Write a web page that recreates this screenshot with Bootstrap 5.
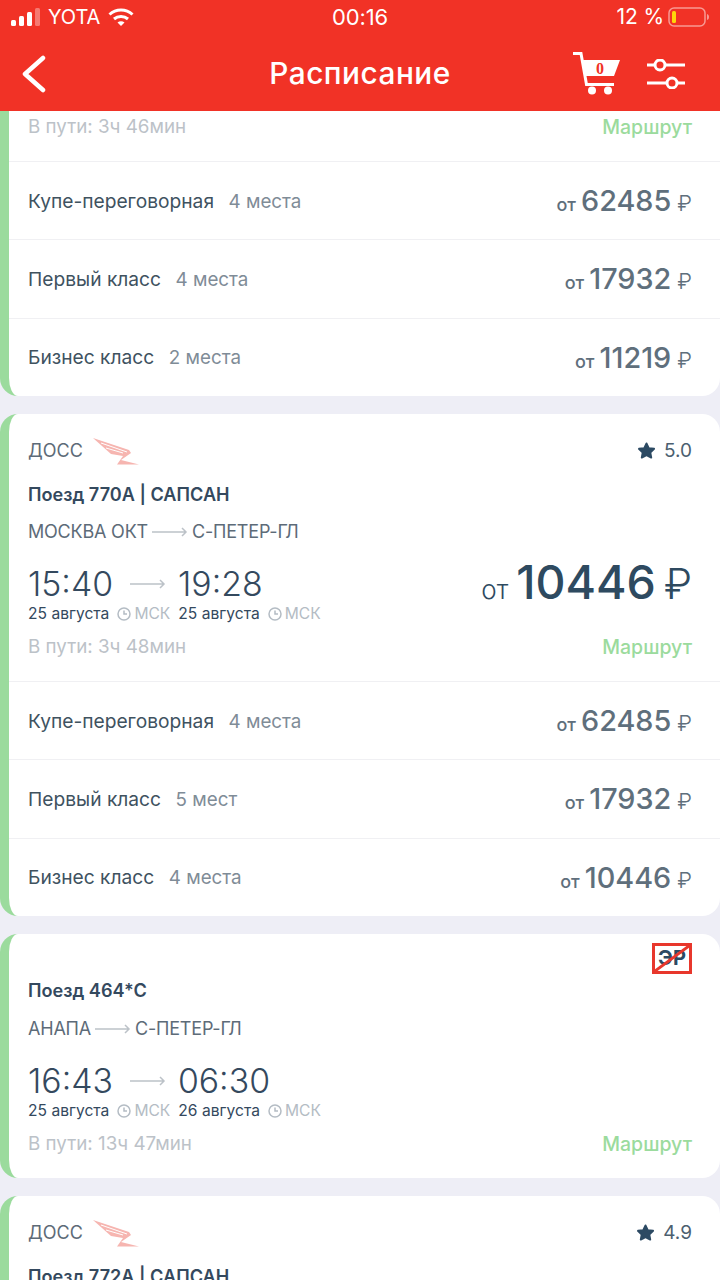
<!DOCTYPE html>
<html lang="en">
<head>
  <meta charset="UTF-8">
  <title>Расписание</title>
  <meta name="viewport" content="width=device-width, initial-scale=1">
  <link href="https://cdn.jsdelivr.net/npm/bootstrap@5.3.0/dist/css/bootstrap.min.css" rel="stylesheet">
  <style>
    html, body {
      height: 1280px;
      overflow: hidden;
    }
    body {
      background-color: #eeeef6;
      font-family: Inter, "Liberation Sans", sans-serif;
      color: #34495e;
    }
    .top-head {
      background-color: #f13226;
      color: #fff;
      height: 111px;
      position: relative;
      z-index: 2;
    }
    .status-row {
      height: 34px;
      padding: 0 10px;
      font-size: 21px;
      letter-spacing: -0.1px;
    }
    .status-side {
      width: 250px;
    }
    .carrier-name {
      font-size: 20px;
    }
    .clock-text {
      font-size: 22px;
    }
    .head-row {
      height: 77px;
      padding: 2px 35px 0 22px;
    }
    .head-title {
      font-size: 29.8px;
      font-weight: 500;
      letter-spacing: 0.5px;
    }
    .head-back {
      width: 133px;
    }
    .head-side {
      width: 120px;
      gap: 26px;
    }
    .feed {
      margin-top: -20px;
    }
    .trip-box {
      background: #fff;
      border-left: 9px solid #9bdb9d;
      border-radius: 18px;
      margin-bottom: 18px;
    }
    .trip-main {
      padding: 16px 28px 22px 19px;
    }
    .trip-main-cut {
      padding-top: 24px;
    }
    .trip-main-er {
      padding-top: 9px;
    }
    .firm-row {
      height: 40px;
      padding-top: 2px;
    }
    .firm-left {
      gap: 10px;
    }
    .firm-name {
      font-size: 18px;
      color: #5d6b78;
    }
    .rate-text {
      font-size: 19px;
      color: #4c5f70;
    }
    .train-name {
      font-size: 18.1px;
      font-weight: 600;
      margin-top: 12px;
      line-height: 24px;
    }
    .train-after-er {
      margin-top: 4px;
      margin-bottom: 15px;
    }
    .route-line {
      font-size: 18px;
      color: #5d6b78;
      margin-top: 14px;
      line-height: 24px;
      letter-spacing: -0.2px;
    }
    .train-after-er + .route-line {
      margin-top: 0;
    }
    .time-block {
      margin-top: 20px;
    }
    .time-big {
      font-size: 33.8px;
      font-weight: 300;
      line-height: 40px;
    }
    .time-arrow {
      margin: 0 12px 0 17px;
    }
    .date-sub {
      font-size: 15.6px;
      line-height: 18px;
      white-space: nowrap;
      margin-top: 1px;
    }
    .tz-sub {
      color: #b4bcc4;
      gap: 3px;
    }
    .way-row {
      margin-top: 12px;
    }
    .way-line {
      font-size: 18.8px;
      color: #bcc2c8;
      line-height: 24px;
    }
    .way-link {
      font-size: 19.5px;
      font-weight: 500;
      color: #9bdb9d;
      line-height: 24px;
    }
    .price-big {
      font-size: 46.5px;
      font-weight: 500;
      line-height: 40px;
      color: #2e4a60;
      gap: 8px;
      margin-top: -2px;
    }
    .price-from {
      font-size: 26px;
      font-weight: 300;
    }
    .rub-thin {
      font-size: 42px;
      font-weight: 300;
    }
    .cls-row {
      height: 78.33px;
      padding: 0 28px 0 19px;
      border-top: 1px solid #f0f0f3;
    }
    .cls-label {
      padding-top: 1px;
    }
    .cls-name {
      font-size: 19.2px;
      color: #40525f;
    }
    .cls-seats {
      font-size: 18.8px;
      color: #7f8c97;
      margin-left: 14.5px;
    }
    .cls-price {
      font-size: 28.8px;
      font-weight: 500;
      color: #5f6f7c;
      line-height: 36px;
      gap: 5px;
      padding-top: 5px;
    }
    .cls-from {
      font-size: 18px;
      font-weight: 500;
    }
    .cls-rub {
      font-size: 22px;
      font-weight: 300;
      margin-left: 1px;
    }
    .er-mark {
      width: 40px;
      height: 31px;
      position: relative;
      border: 3px solid #e8372c;
      font-size: 20px;
      font-weight: 700;
      line-height: 25px;
      text-align: center;
      color: #2c4a63;
    }
    .er-mark svg {
      position: absolute;
      left: 0;
      top: 0;
    }
  </style>
</head>
<body>

<header class="top-head">
  <div class="status-row d-flex align-items-center justify-content-between">
    <div class="status-side d-flex align-items-center gap-2">
      <svg width="30" height="18" viewBox="0 0 30 18">
        <rect x="1" y="12" width="5" height="6" rx="1.5" fill="#fff"/>
        <rect x="9" y="8" width="5" height="10" rx="1.5" fill="#fff"/>
        <rect x="17" y="4" width="5" height="14" rx="1.5" fill="#fff"/>
        <rect x="25" y="0" width="5" height="18" rx="1.5" fill="#fff" fill-opacity=".35"/>
      </svg>
      <span class="carrier-name">YOTA</span>
      <svg width="26" height="20" viewBox="0 0 26 20" fill="none" stroke="#fff" stroke-width="3">
        <path d="M1.5 7.5C8 1.5 18 1.5 24.5 7.5"/>
        <path d="M6 12C10 8.5 16 8.5 20 12"/>
        <path d="M13 19l-3.5-3.6c2-1.600 5-1.600 7 0z" fill="#fff" stroke="none"/>
      </svg>
    </div>
    <span class="clock-text">00:16</span>
    <div class="status-side d-flex align-items-center justify-content-end gap-1">
      <span>12 %</span>
      <svg width="42" height="20" viewBox="0 0 42 20">
        <rect x="1" y="1" width="36" height="18" rx="5" fill="none" stroke="#fff" stroke-opacity=".5" stroke-width="1.500"/>
        <rect x="4" y="4" width="4" height="12" rx="1.500" fill="#ffd60a"/>
        <path d="M39 7c1.500.5 2 1.500 2 3s-.5 2.500-2 3z" fill="#fff" fill-opacity=".5"/>
      </svg>
    </div>
  </div>
  <div class="head-row d-flex align-items-center justify-content-between">
    <div class="head-back">
      <svg width="24" height="38" viewBox="0 0 24 38" fill="none" stroke="#fff" stroke-width="4.500" stroke-linecap="round" stroke-linejoin="round">
        <path d="M21 3L3 19l18 16"/>
      </svg>
    </div>
    <div class="head-title">Расписание</div>
    <div class="head-side d-flex align-items-center justify-content-end">
      <svg width="48" height="43" viewBox="0 0 48 43" fill="#fff">
        <path d="M0 1.500H8L13.500 32.500H41" fill="none" stroke="#fff" stroke-width="3"/>
        <path d="M10 8H47L41 24H12z"/>
        <circle cx="19" cy="38.500" r="4"/>
        <circle cx="35" cy="38.500" r="4"/>
        <text x="27" y="22" font-size="16" font-weight="700" text-anchor="middle" fill="#f13226" font-family="Liberation Serif">0</text>
      </svg>
      <svg width="38" height="30" viewBox="0 0 38 30" fill="none" stroke="#fff" stroke-width="3">
        <path d="M0 6h7.500M18.500 6H38"/>
        <circle cx="13" cy="6" r="5"/>
        <path d="M0 24h19.500M30.500 24H38"/>
        <circle cx="25" cy="24" r="5"/>
      </svg>
    </div>
  </div>
</header>

<main class="feed">
  <section class="trip-box">
    <div class="trip-main trip-main-cut d-flex justify-content-between align-items-center">
      <span class="way-line">В пути: 3ч 46мин</span>
      <span class="way-link">Маршрут</span>
    </div>
    <div>
      <div class="cls-row d-flex align-items-center justify-content-between">
        <div class="cls-label"><span class="cls-name">Купе-переговорная</span><span class="cls-seats">4 места</span></div>
        <div class="cls-price d-flex align-items-baseline"><span class="cls-from">от</span><span>62485</span><span class="cls-rub">₽</span></div>
      </div>
      <div class="cls-row d-flex align-items-center justify-content-between">
        <div class="cls-label"><span class="cls-name">Первый класс</span><span class="cls-seats">4 места</span></div>
        <div class="cls-price d-flex align-items-baseline"><span class="cls-from">от</span><span>17932</span><span class="cls-rub">₽</span></div>
      </div>
      <div class="cls-row d-flex align-items-center justify-content-between">
        <div class="cls-label"><span class="cls-name">Бизнес класс</span><span class="cls-seats">2 места</span></div>
        <div class="cls-price d-flex align-items-baseline"><span class="cls-from">от</span><span>11219</span><span class="cls-rub">₽</span></div>
      </div>
    </div>
  </section>

  <section class="trip-box">
    <div class="trip-main">
      <div class="firm-row d-flex justify-content-between align-items-center">
        <div class="firm-left d-flex align-items-center">
          <span class="firm-name">ДОСС</span>
          <svg width="46" height="28" viewBox="0 0 46 28">
            <path d="M0 1L36 13l2 3-10 7 18 4.500H24l6-8.500-12-2z" fill="#f6b5b0"/>
            <path d="M8 6l26 9M13 11l17 5" stroke="#fff" stroke-width="1" fill="none"/>
          </svg>
        </div>
        <div class="d-flex align-items-center gap-2">
          <svg width="19" height="19" viewBox="0 0 20 19" fill="#2c4a63" stroke="#2c4a63" stroke-width="2" stroke-linejoin="round"><path d="M10 2l2.400 5 5.600.7-4 3.900 1 5.400-5-2.700L5 17l1-5.400-4-3.900 5.600-.7z"/></svg>
          <span class="rate-text">5.0</span>
        </div>
      </div>
      <div class="train-name">Поезд 770А | САПСАН</div>
      <div class="route-line d-flex align-items-center gap-1">МОСКВА ОКТ
        <svg width="36" height="10" viewBox="0 0 36 10" fill="none" stroke="#bcc2c8" stroke-width="1.500"><path d="M0 5h34M30 1l4 4-4 4"/></svg>
        С-ПЕТЕР-ГЛ</div>
      <div class="time-block d-flex justify-content-between align-items-start">
        <div>
          <div class="d-flex align-items-center">
            <span class="time-big">15:40</span>
            <svg class="time-arrow" width="36" height="10" viewBox="0 0 36 10" fill="none" stroke="#bcc2c8" stroke-width="1.500"><path d="M0 5h34M30 1l4 4-4 4"/></svg>
            <span class="time-big">19:28</span>
          </div>
          <div class="d-flex gap-2 date-sub">
            <span>25 августа</span>
            <span class="tz-sub d-flex align-items-center"><svg width="14" height="14" viewBox="0 0 14 14" fill="none" stroke="#b4bcc4" stroke-width="1.500"><circle cx="7" cy="7" r="6"/><path d="M7 3.500V7h3"/></svg>МСК</span>
            <span>25 августа</span>
            <span class="tz-sub d-flex align-items-center"><svg width="14" height="14" viewBox="0 0 14 14" fill="none" stroke="#b4bcc4" stroke-width="1.500"><circle cx="7" cy="7" r="6"/><path d="M7 3.500V7h3"/></svg>МСК</span>
          </div>
        </div>
        <div class="price-big d-flex align-items-baseline"><span class="price-from">от</span><span>10446</span><span class="rub-thin">₽</span></div>
      </div>
      <div class="way-row d-flex justify-content-between align-items-center">
        <span class="way-line">В пути: 3ч 48мин</span>
        <span class="way-link">Маршрут</span>
      </div>
    </div>
    <div>
      <div class="cls-row d-flex align-items-center justify-content-between">
        <div class="cls-label"><span class="cls-name">Купе-переговорная</span><span class="cls-seats">4 места</span></div>
        <div class="cls-price d-flex align-items-baseline"><span class="cls-from">от</span><span>62485</span><span class="cls-rub">₽</span></div>
      </div>
      <div class="cls-row d-flex align-items-center justify-content-between">
        <div class="cls-label"><span class="cls-name">Первый класс</span><span class="cls-seats">5 мест</span></div>
        <div class="cls-price d-flex align-items-baseline"><span class="cls-from">от</span><span>17932</span><span class="cls-rub">₽</span></div>
      </div>
      <div class="cls-row d-flex align-items-center justify-content-between">
        <div class="cls-label"><span class="cls-name">Бизнес класс</span><span class="cls-seats">4 места</span></div>
        <div class="cls-price d-flex align-items-baseline"><span class="cls-from">от</span><span>10446</span><span class="cls-rub">₽</span></div>
      </div>
    </div>
  </section>

  <section class="trip-box">
    <div class="trip-main trip-main-er">
      <div class="d-flex justify-content-end">
        <div class="er-mark">ЭР
          <svg width="34" height="25" viewBox="0 0 34 25"><path d="M0 25L34 0" stroke="#e8372c" stroke-width="3"/></svg>
        </div>
      </div>
      <div class="train-name train-after-er">Поезд 464*С</div>
      <div class="route-line d-flex align-items-center gap-1">АНАПА
        <svg width="36" height="10" viewBox="0 0 36 10" fill="none" stroke="#bcc2c8" stroke-width="1.500"><path d="M0 5h34M30 1l4 4-4 4"/></svg>
        С-ПЕТЕР-ГЛ</div>
      <div class="time-block">
        <div class="d-flex align-items-center">
          <span class="time-big">16:43</span>
          <svg class="time-arrow" width="36" height="10" viewBox="0 0 36 10" fill="none" stroke="#bcc2c8" stroke-width="1.500"><path d="M0 5h34M30 1l4 4-4 4"/></svg>
          <span class="time-big">06:30</span>
        </div>
        <div class="d-flex gap-2 date-sub">
          <span>25 августа</span>
          <span class="tz-sub d-flex align-items-center"><svg width="14" height="14" viewBox="0 0 14 14" fill="none" stroke="#b4bcc4" stroke-width="1.500"><circle cx="7" cy="7" r="6"/><path d="M7 3.500V7h3"/></svg>МСК</span>
          <span>26 августа</span>
          <span class="tz-sub d-flex align-items-center"><svg width="14" height="14" viewBox="0 0 14 14" fill="none" stroke="#b4bcc4" stroke-width="1.500"><circle cx="7" cy="7" r="6"/><path d="M7 3.500V7h3"/></svg>МСК</span>
        </div>
      </div>
      <div class="way-row d-flex justify-content-between align-items-center">
        <span class="way-line">В пути: 13ч 47мин</span>
        <span class="way-link">Маршрут</span>
      </div>
    </div>
  </section>

  <section class="trip-box">
    <div class="trip-main">
      <div class="firm-row d-flex justify-content-between align-items-center">
        <div class="firm-left d-flex align-items-center">
          <span class="firm-name">ДОСС</span>
          <svg width="46" height="28" viewBox="0 0 46 28">
            <path d="M0 1L36 13l2 3-10 7 18 4.500H24l6-8.500-12-2z" fill="#f6b5b0"/>
            <path d="M8 6l26 9M13 11l17 5" stroke="#fff" stroke-width="1" fill="none"/>
          </svg>
        </div>
        <div class="d-flex align-items-center gap-2">
          <svg width="19" height="19" viewBox="0 0 20 19" fill="#2c4a63" stroke="#2c4a63" stroke-width="2" stroke-linejoin="round"><path d="M10 2l2.400 5 5.600.7-4 3.900 1 5.400-5-2.700L5 17l1-5.400-4-3.900 5.600-.7z"/></svg>
          <span class="rate-text">4.9</span>
        </div>
      </div>
      <div class="train-name">Поезд 772А | САПСАН</div>
    </div>
  </section>
</main>

<script src="https://cdn.jsdelivr.net/npm/bootstrap@5.3.0/dist/js/bootstrap.bundle.min.js"></script>
</body>
</html>
